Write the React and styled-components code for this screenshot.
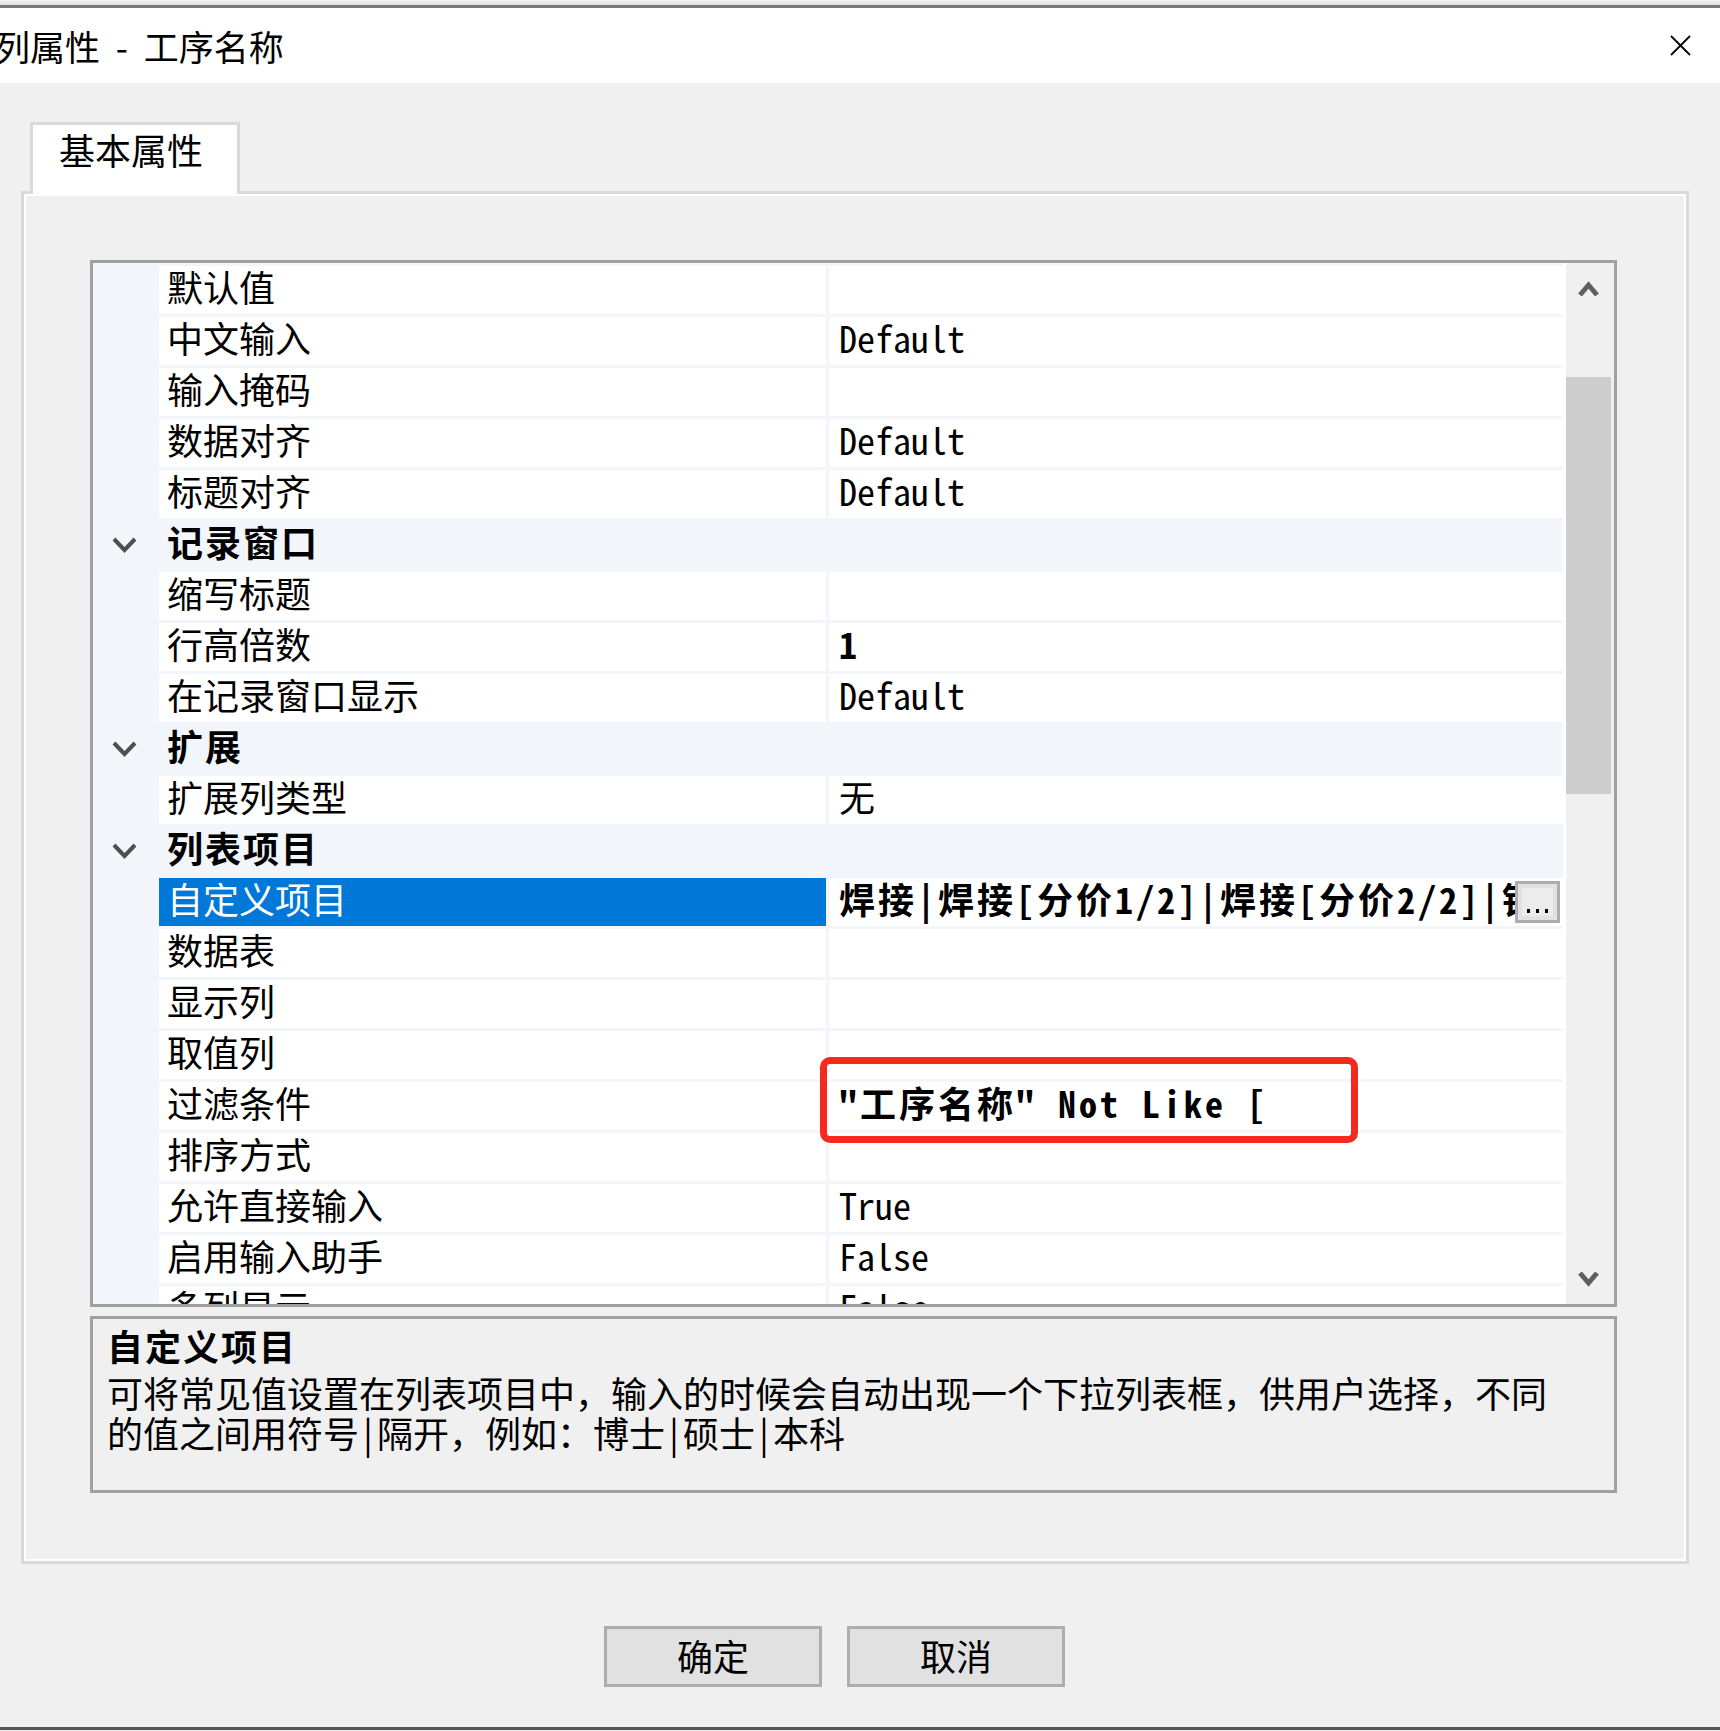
import * as React from "react";
import styled, { createGlobalStyle } from "styled-components";

const CJK = `"Noto Sans CJK SC", "Noto Sans", sans-serif`;
const MONO = `"Noto Sans Mono CJK SC", "Liberation Mono", "Noto Sans CJK SC", monospace`;

const GlobalStyle = createGlobalStyle`
  html, body {
    margin: 0;
    padding: 0;
    background: #f0f0f0;
  }
  * { box-sizing: border-box; }
`;

const Window = styled.div`
  width: 1720px;
  height: 1731px;
  display: flex;
  flex-direction: column;
  background: #f0f0f0;
  overflow: hidden;
  font-family: ${CJK};
  color: #000;
`;

const TopEdge = styled.div`
  height: 8px;
  flex-shrink: 0;
  background: linear-gradient(#f6f6f6, #dedede);
  border-bottom: 3px solid #787878;
`;

const TitleBar = styled.div`
  height: 75px;
  flex-shrink: 0;
  background: #fff;
  display: flex;
  align-items: center;
  justify-content: space-between;
  padding-right: 29px;
`;

const Title = styled.div`
  font-size: 35px;
  line-height: 1;
  margin-left: -5px;
  word-spacing: 8px;
  white-space: pre;
`;

const Body = styled.div`
  flex: 1;
  display: flex;
  flex-direction: column;
  padding: 39px 31px 0 21px;
`;

const TabStrip = styled.div`
  display: flex;
  padding-left: 9px;
  margin-bottom: -3px;
  position: relative;
  z-index: 1;
`;

const Tab = styled.div`
  width: 210px;
  height: 72px;
  border: 3px solid #d9d9d9;
  border-bottom: none;
  background: #fff;
  padding: 2px 0 0 26px;
  font-size: 36px;
  line-height: 44px;
`;

const Panel = styled.div`
  height: 1373px;
  flex-shrink: 0;
  border: 3px solid #d9d9d9;
  box-shadow: inset 0 0 0 2px #fff;
  padding: 66px 69px 0 66px;
  display: flex;
  flex-direction: column;
`;

const Grid = styled.div`
  height: 1047px;
  flex-shrink: 0;
  border: 3px solid #a0a0a0;
  background: #fff;
  display: flex;
  position: relative;
`;

const RowList = styled.div`
  width: 1470px;
  height: 100%;
  overflow: hidden;
  background: #f2f5fa;
`;

const Row = styled.div`
  display: grid;
  grid-template-columns: 63px 667px 734px;
  column-gap: 3px;
  height: 48px;
  margin-top: 3px;
`;

const Gutter = styled.div`
  display: flex;
  align-items: center;
  justify-content: center;
`;

const NameCell = styled.div`
  background: ${(p) => (p.$selected ? "#0078d7" : "#fff")};
  color: ${(p) => (p.$selected ? "#fff" : "#000")};
  display: flex;
  align-items: center;
  padding: 0 0 8px 8px;
  font-size: 36px;
  line-height: 40px;
  white-space: nowrap;
`;

const CategoryLabel = styled.div`
  display: flex;
  align-items: center;
  padding: 0 0 8px 8px;
  font-size: 36px;
  font-weight: 700;
  letter-spacing: 2px;
  line-height: 40px;
  white-space: nowrap;
`;

const ValueCell = styled.div`
  background: #fff;
  display: flex;
  align-items: center;
  padding-left: 10px;
`;

const ValueText = styled.div`
  flex: 1;
  min-width: 0;
  overflow-x: clip;
  overflow-y: visible;
  white-space: nowrap;
  font-family: ${MONO};
  font-size: 36px;
  line-height: 40px;
  padding-bottom: 8px;
  font-weight: ${(p) => (p.$bold ? 700 : 400)};
  letter-spacing: ${(p) => (p.$bold ? "3px" : "0")};
`;

const EllipsisButton = styled.div`
  width: 45px;
  height: 42px;
  margin-right: 3px;
  flex-shrink: 0;
  border: 3px solid #adadad;
  background: #e1e1e1;
  padding: 4px;
  display: flex;
`;

const EllipsisFace = styled.div`
  flex: 1;
  background: #ececec;
  display: flex;
  align-items: flex-end;
  justify-content: center;
  gap: 6px;
  padding-bottom: 3px;
`;

const Dot = styled.span`
  width: 3px;
  height: 4px;
  background: #000;
`;

const Scrollbar = styled.div`
  width: 48px;
  margin-left: 3px;
  background: #f0f0f0;
  display: flex;
  flex-direction: column;
`;

const ScrollArrow = styled.div`
  height: 51px;
  flex-shrink: 0;
  display: flex;
  align-items: center;
  justify-content: center;
  padding-right: 3px;
`;

const Track = styled.div`
  flex: 1;
`;

const Thumb = styled.div`
  margin-top: ${(p) => p.$offset}px;
  height: ${(p) => p.$size}px;
  width: 45px;
  background: #cdcdcd;
`;

const Highlight = styled.div`
  position: absolute;
  left: 727px;
  top: 794px;
  width: 538px;
  height: 86px;
  border: 7px solid #f52a1c;
  border-radius: 10px;
  pointer-events: none;
`;

const DescBox = styled.div`
  margin-top: 9px;
  height: 177px;
  flex-shrink: 0;
  border: 3px solid #a0a0a0;
  padding: 2px 14px 0;
`;

const DescTitle = styled.div`
  font-size: 36px;
  font-weight: 700;
  letter-spacing: 2px;
  line-height: 48px;
`;

const DescText = styled.div`
  margin-top: 3px;
  font-family: ${MONO};
  font-size: 36px;
  line-height: 40px;
  white-space: nowrap;
`;

const ButtonRow = styled.div`
  display: flex;
  gap: 25px;
  margin-top: 62px;
  padding-left: 583px;
`;

const DialogButton = styled.button`
  width: 218px;
  height: 61px;
  border: 3px solid #adadad;
  background: #e1e1e1;
  padding: 0 0 4px;
  font-family: ${CJK};
  font-size: 36px;
  line-height: 1;
  color: #000;
`;

const BottomEdge = styled.div`
  height: 4px;
  flex-shrink: 0;
  border-top: 3px solid #555;
  background: #e8e8e8;
`;

const rows = [
  { name: "默认值", value: "" },
  { name: "中文输入", value: "Default" },
  { name: "输入掩码", value: "" },
  { name: "数据对齐", value: "Default" },
  { name: "标题对齐", value: "Default" },
  { category: "记录窗口" },
  { name: "缩写标题", value: "" },
  { name: "行高倍数", value: "1", bold: true },
  { name: "在记录窗口显示", value: "Default" },
  { category: "扩展" },
  { name: "扩展列类型", value: "无" },
  { category: "列表项目" },
  {
    name: "自定义项目",
    value: "焊接|焊接[分价1/2]|焊接[分价2/2]|钎焊|钎焊[分价1/2]",
    bold: true,
    selected: true,
    button: true,
  },
  { name: "数据表", value: "" },
  { name: "显示列", value: "" },
  { name: "取值列", value: "" },
  { name: "过滤条件", value: "\"工序名称\" Not Like [", bold: true },
  { name: "排序方式", value: "" },
  { name: "允许直接输入", value: "True" },
  { name: "启用输入助手", value: "False" },
  { name: "多列显示", value: "False" },
];

function CloseIcon() {
  return (
    <svg width="21" height="21" viewBox="0 0 21 21">
      <path d="M1 1 L20 20 M20 1 L1 20" stroke="#000" strokeWidth="1.8" fill="none" />
    </svg>
  );
}

function ExpandChevron() {
  return (
    <svg width="27" height="18" viewBox="0 0 27 18">
      <path d="M3 3 L13.5 14 L24 3" stroke="#4f4f4f" strokeWidth="4" fill="none" />
    </svg>
  );
}

function ScrollChevron({ down }) {
  return (
    <svg width="21" height="18" viewBox="0 0 21 18">
      <path
        d={down ? "M2 3 L10.5 13 L19 3" : "M2 15 L10.5 5 L19 15"}
        stroke="#606060"
        strokeWidth="5"
        fill="none"
      />
    </svg>
  );
}

function PropertyRow({ row }) {
  if (row.category) {
    return (
      <Row>
        <Gutter>
          <ExpandChevron />
        </Gutter>
        <CategoryLabel>{row.category}</CategoryLabel>
      </Row>
    );
  }
  return (
    <Row>
      <Gutter />
      <NameCell $selected={row.selected}>{row.name}</NameCell>
      <ValueCell>
        <ValueText $bold={row.bold}>{row.value}</ValueText>
        {row.button && (
          <EllipsisButton>
            <EllipsisFace>
              <Dot />
              <Dot />
              <Dot />
            </EllipsisFace>
          </EllipsisButton>
        )}
      </ValueCell>
    </Row>
  );
}

export default function App() {
  return (
    <Window>
      <GlobalStyle />
      <TopEdge />
      <TitleBar>
        <Title>列属性 - 工序名称</Title>
        <CloseIcon />
      </TitleBar>
      <Body>
        <TabStrip>
          <Tab>基本属性</Tab>
        </TabStrip>
        <Panel>
          <Grid>
            <RowList>
              {rows.map((r, i) => (
                <PropertyRow key={i} row={r} />
              ))}
            </RowList>
            <Scrollbar>
              <ScrollArrow>
                <ScrollChevron />
              </ScrollArrow>
              <Track>
                <Thumb $offset={63} $size={417} />
              </Track>
              <ScrollArrow>
                <ScrollChevron down />
              </ScrollArrow>
            </Scrollbar>
            <Highlight />
          </Grid>
          <DescBox>
            <DescTitle>自定义项目</DescTitle>
            <DescText>
              可将常见值设置在列表项目中，输入的时候会自动出现一个下拉列表框，供用户选择，不同
              <br />
              的值之间用符号|隔开，例如：博士|硕士|本科
            </DescText>
          </DescBox>
        </Panel>
        <ButtonRow>
          <DialogButton>确定</DialogButton>
          <DialogButton>取消</DialogButton>
        </ButtonRow>
      </Body>
      <BottomEdge />
    </Window>
  );
}
